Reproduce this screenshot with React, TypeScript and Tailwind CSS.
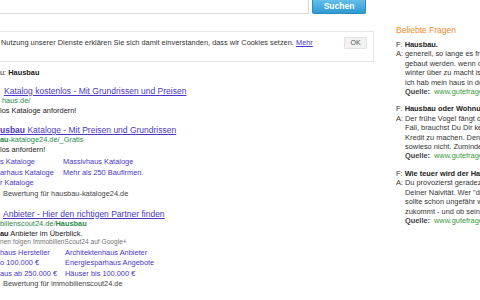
const link = "text-[#4a36c6] underline decoration-[0.5px] underline-offset-[1px]";
const green = "text-[#2b8a4a]";

const faqs = [
  {
    q: "Hausbau.",
    a: [
      "generell, so lange es frostfrei ist, kann",
      "gebaut werden. wenn das haus dicht ist",
      "winter über zu macht ist es egal, wann",
      "ich hab mein haus in den wintermonaten",
    ],
  },
  {
    q: "Hausbau oder Wohnung kaufen?",
    a: [
      "Der frühe Vogel fängt den Wurm. Auf jeden",
      "Fall, brauchst Du Dir keine Gedanken um",
      "Kredit zu machen. Den bekommst Du",
      "sowieso nicht. Zumindest nicht so",
    ],
  },
  {
    q: "Wie teuer wird der Hausbau?",
    a: [
      "Du provozierst geradezu mit",
      "Deiner Naivität. Wer \"den Hausbau\"",
      "sollte schon ungefähr wissen, was auf ihn",
      "zukommt - und ob sein Geld reicht.",
    ],
  },
];

function Sitelinks({ col, rows }: { col: string; rows: [string, string][] }) {
  return (
    <div className={`mt-[2px] grid ${col} text-[7.4px] leading-[10.5px] text-[#4a36c6]`}>
      {rows.map(([a, b], i) => (
        <div key={i} className="contents">
          <span className="whitespace-nowrap">{a}</span>
          <span className="whitespace-nowrap">{b}</span>
        </div>
      ))}
    </div>
  );
}

export default function App() {
  return (
    <div className="h-[300px] w-[480px] overflow-hidden bg-white font-['Liberation_Sans',Arial,sans-serif] text-[#222]">
      <div className="flex h-[14px] items-stretch">
        <div className="w-[309px] border-b border-r border-[#d9d9d9] bg-white" />
        <button className="ml-[3px] w-[54px] rounded-b-[2px] border border-t-0 border-[#2d8cc2] bg-gradient-to-b from-[#62c0ea] to-[#2e9ad2] text-[8.5px] font-bold leading-[13px] text-white">
          Suchen
        </button>
      </div>

      <div className="flex">
        <div className="w-[374px] shrink-0">
          <div className="mt-[17px] flex h-[31px] items-start justify-between border border-l-0 border-[#e6e6e6] pr-[6px] pt-[5px]">
            <p className="whitespace-nowrap pl-[1px] text-[7.4px] leading-[12px] text-[#333]">
              Nutzung unserer Dienste erklären Sie sich damit einverstanden, dass wir Cookies setzen.{" "}
              <span className={link}>Mehr</span>
            </p>
            <span className="h-[12px] w-[23px] rounded-[1px] border border-[#e3e3e3] bg-[#f2f2f2] text-center text-[7px] leading-[10px] text-[#555]">
              OK
            </span>
          </div>

          <p className="mt-[6px] text-[7.4px] leading-[10px]">
            u: <b>Hausbau</b>
          </p>

          <div className="mt-[8px] whitespace-nowrap">
            <p className={`pl-[4px] text-[8.5px] leading-[10px] ${link}`}>Katalog kostenlos - Mit Grundrissen und Preisen</p>
            <p className={`pl-[2px] text-[7.4px] leading-[10px] ${green}`}>haus.de/</p>
            <p className="text-[7.4px] leading-[10px]">los Kataloge anfordern!</p>
          </div>

          <div className="mt-[9px] whitespace-nowrap">
            <p className={`text-[8.5px] leading-[10px] ${link}`}>
              <b>usbau</b> Kataloge - Mit Preisen und Grundrissen
            </p>
            <p className={`text-[7.4px] leading-[10px] ${green}`}>
              <b>au</b>-kataloge24.de/_Gratis
            </p>
            <p className="text-[7.4px] leading-[10px]">los anfordern!</p>
            <Sitelinks
              col="grid-cols-[63px_auto]"
              rows={[
                ["s Kataloge", "Massivhaus Kataloge"],
                ["arhaus Kataloge", "Mehr als 250 Baufirmen."],
                ["r Kataloge", ""],
              ]}
            />
            <p className="pl-[3px] text-[7.4px] leading-[10px] text-[#444]">Bewertung für hausbau-kataloge24.de</p>
          </div>

          <div className="mt-[10px] whitespace-nowrap">
            <p className={`pl-[3px] text-[8.5px] leading-[10px] ${link}`}>Anbieter - Hier den richtigen Partner finden</p>
            <p className={`text-[7.4px] leading-[10px] ${green}`}>
              bilienscout24.de/<b>Hausbau</b>
            </p>
            <p className="text-[7.4px] leading-[9px]">
              <b>au</b> Anbieter im Überblick.
            </p>
            <p className="text-[6.6px] leading-[8px] text-[#777]">nen folgen ImmobilienScout24 auf Google+</p>
            <div className="mt-[1px]">
              <Sitelinks
                col="grid-cols-[65px_auto]"
                rows={[
                  ["haus Hersteller", "Architektenhaus Anbieter"],
                  ["o 100.000 €", "Energiesparhaus Angebote"],
                  ["aus ab 250.000 €", "Häuser bis 100.000 €"],
                ]}
              />
            </div>
            <p className="pl-[3px] text-[7.4px] leading-[10px] text-[#444]">Bewertung für immobilienscout24.de</p>
          </div>
        </div>

        <div className="ml-[22px] mt-[11px] shrink-0 whitespace-nowrap text-[7.4px] leading-[9.4px] text-[#333]">
          <p className="text-[8.5px] leading-[10px] text-[#f0892a]">Beliebte Fragen</p>
          {faqs.map((f, i) => (
            <div key={i} className={i === 0 ? "mt-[5px]" : "mt-[8px]"}>
              <p>
                F: <b className="text-[#222]">{f.q}</b>
              </p>
              {f.a.map((line, j) => (
                <div key={j} className="flex">
                  <span className="w-[9px] shrink-0">{j === 0 ? "A:" : ""}</span>
                  <span>{line}</span>
                </div>
              ))}
              <div className="flex">
                <span className="w-[9px] shrink-0" />
                <b className="w-[29px] shrink-0 text-[#444]">Quelle:</b>
                <span className="text-[#3a9a3a]">www.gutefrage.net</span>
              </div>
            </div>
          ))}
        </div>
      </div>
    </div>
  );
}
